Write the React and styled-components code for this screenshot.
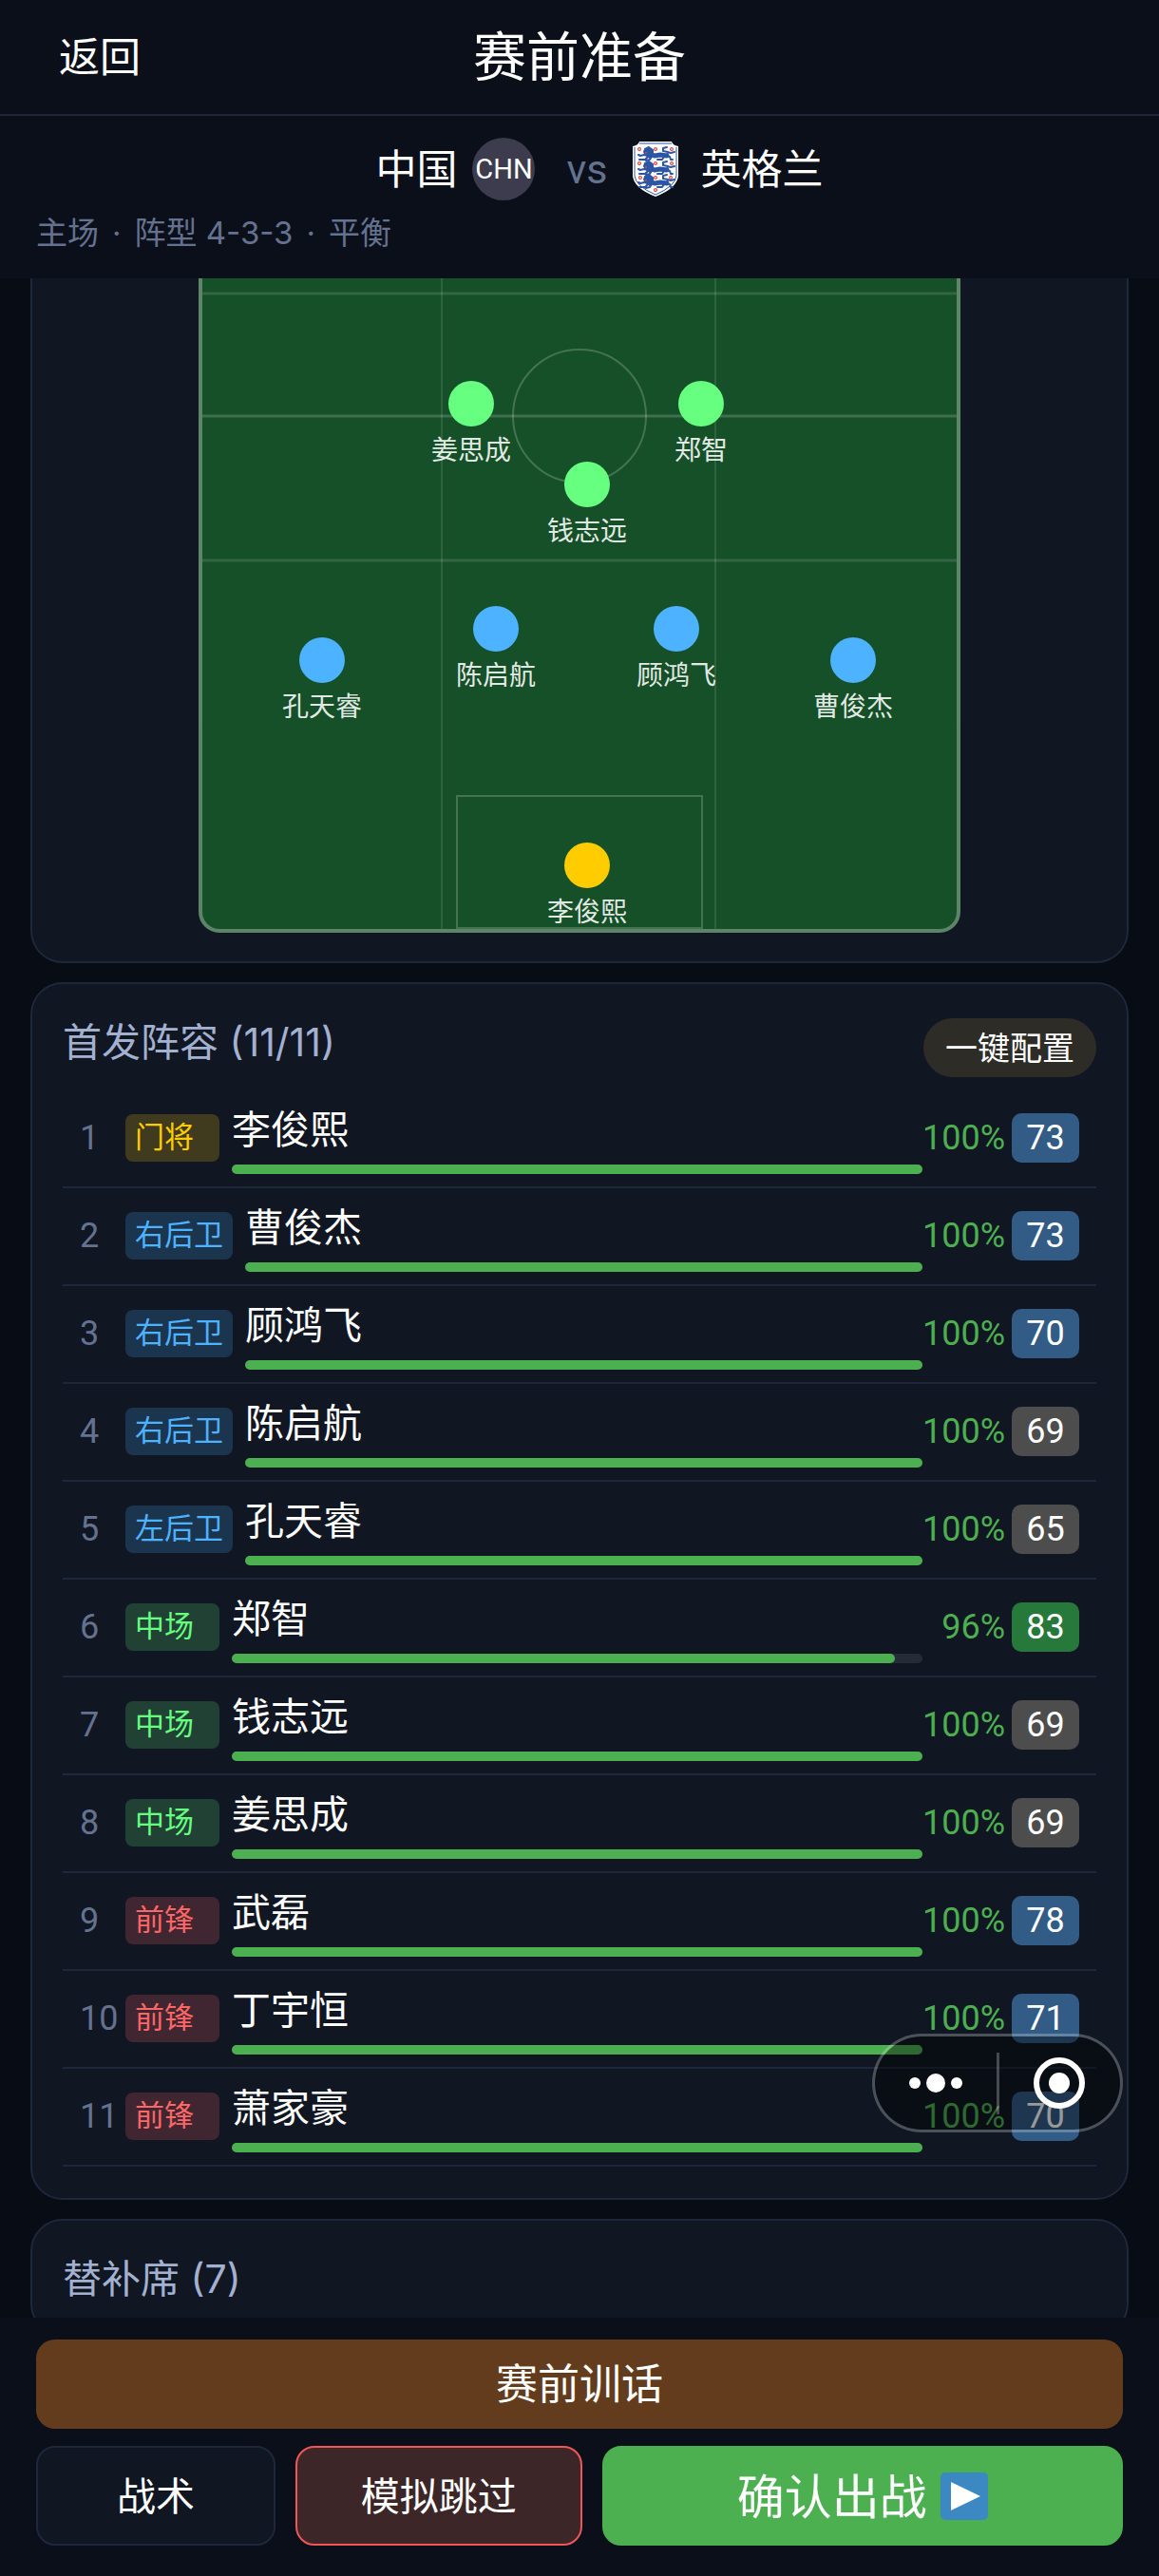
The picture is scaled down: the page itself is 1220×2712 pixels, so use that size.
import React from "react";
import styled, { createGlobalStyle } from "styled-components";

// Stylesheet

const color = {
  page: "#080c15",
  bar: "#0b0f1a",
  panel: "#101622",
  line: "#1f273b",
  white: "#ffffff",
  muted: "#64728f",
  title: "#a3b1d1",
  green: "#4caf50"
};

const tones = {
  gk: { text: "#ffcc00", back: "#403a1e" },
  df: { text: "#4db2ff", back: "#1c354e" },
  mf: { text: "#66ff80", back: "#214135" },
  fw: { text: "#ff6666", back: "#402631" }
};

const ratingBack = { top: "#27783b", good: "#325b86", plain: "#4d4d4d" };

const GlobalStyle = createGlobalStyle`
* {
  box-sizing: border-box;
}
body {
  margin: 0;
  background-color: ${color.page};
  color: ${color.white};
  font-family: Roboto, "Noto Sans CJK SC", sans-serif;
}
button {
  font-family: inherit;
  color: inherit;
  cursor: pointer;
}
`;

const Screen = styled.div`
display: flex;
flex-direction: column;
height: 100vh;
overflow: hidden;
`;

const TopBar = styled.header`
display: grid;
grid-template-columns: 1fr auto 1fr;
align-items: center;
flex: none;
height: 122px;
padding: 2px 62px 0;
background-color: ${color.bar};
border-bottom: 2px solid ${color.line};
`;

const BackButton = styled.button`
justify-self: start;
padding: 0;
border: 0;
background: none;
font-size: 43px;
line-height: 60px;
`;

const PageTitle = styled.h1`
margin: 0;
font-size: 56px;
line-height: 80px;
font-weight: 400;
`;

const MatchBar = styled.section`
flex: none;
height: 171px;
padding: 23px 38px 0;
background-color: ${color.bar};
`;

const Teams = styled.div`
display: flex;
justify-content: center;
align-items: center;
height: 66px;
padding-left: 42px;
font-size: 43px;
`;

const TeamName = styled.span`
padding-bottom: 6px;
`;

const TeamCode = styled.span`
display: flex;
justify-content: center;
align-items: center;
width: 66px;
height: 66px;
margin-left: 16px;
border-radius: 50%;
background-color: #3d3c4f;
font-size: 29px;
`;

const Versus = styled.span`
margin: 0 26px 0 33px;
color: ${color.muted};
font-size: 43px;
`;

const Crest = styled.svg`
width: 48px;
height: 58px;
margin-right: 24px;
`;

const MatchInfo = styled.p`
display: flex;
gap: 14px;
margin: 0;
padding-top: 9px;
color: ${color.muted};
font-family: Inter, "Noto Sans CJK SC", sans-serif;
font-size: 33px;
line-height: 50px;
`;

const Content = styled.main`
display: flex;
flex-direction: column;
flex: 1;
gap: 20px;
min-height: 0;
padding: 0 32px;
overflow: hidden;
`;

const Panel = styled.section`
flex: none;
padding: 36px 32px 33px;
background-color: ${color.panel};
border: 2px solid ${color.line};
border-radius: 34px;
`;

const PitchPanel = styled(Panel)`
display: flex;
justify-content: center;
padding: 0 0 30px;
border-top: 0;
border-radius: 0 0 34px 34px;
`;

const Pitch = styled.div`
position: relative;
width: 802px;
height: 689px;
border: 4px solid rgba(255, 255, 255, 0.3);
border-top: 0;
border-radius: 0 0 22px 22px;
background-color: #165029;
`;

const PitchLines = styled.svg`
display: block;
width: 100%;
height: 100%;
`;

const Spot = styled.div`
position: absolute;
left: ${props => props.$x}px;
top: ${props => props.$y}px;
display: flex;
flex-direction: column;
align-items: center;
transform: translate(-50%, -24px);
color: rgba(255, 255, 255, 0.9);
font-size: 28px;
line-height: 34px;
white-space: nowrap;
&::before {
  content: "";
  width: 48px;
  height: 48px;
  margin-bottom: 9px;
  border-radius: 50%;
  background-color: ${props => tones[props.$tone].text};
}
`;

const PanelHead = styled.div`
display: flex;
justify-content: space-between;
align-items: flex-start;
margin-bottom: 14px;
`;

const PanelTitle = styled.h2`
margin: 0;
color: ${color.title};
font-family: Inter, "Noto Sans CJK SC", sans-serif;
font-size: 41px;
line-height: 50px;
font-weight: 400;
`;

const AutoButton = styled.button`
height: 62px;
padding: 0 23px 4px;
border: 0;
border-radius: 31px;
background-color: #2e2c27;
font-size: 34px;
`;

const PlayerList = styled.ol`
margin: 0;
padding: 0;
list-style: none;
`;

const PlayerRow = styled.li`
display: flex;
align-items: center;
padding: 12px 18px 13px;
border-bottom: 2px solid ${color.line};
`;

const ShirtNumber = styled.span`
width: 48px;
color: ${color.muted};
font-size: 36px;
`;

const Position = styled.span`
min-width: 99px;
height: 50px;
margin-right: 13px;
padding: 0 10px;
border-radius: 8px;
background-color: ${props => tones[props.$tone].back};
color: ${props => tones[props.$tone].text};
font-size: 31px;
line-height: 50px;
`;

const PlayerMain = styled.div`
flex: 1;
`;

const PlayerName = styled.div`
margin-bottom: 6px;
font-size: 41px;
line-height: 60px;
`;

const Track = styled.div`
height: 10px;
border-radius: 5px;
background-color: #262b38;
`;

const Fill = styled.div`
height: 10px;
border-radius: 5px;
background-color: ${color.green};
`;

const Stamina = styled.span`
width: 87px;
margin-right: 7px;
color: ${color.green};
font-size: 36px;
text-align: right;
`;

const Rating = styled.span`
width: 71px;
height: 52px;
border-radius: 10px;
background-color: ${props => ratingBack[props.$level]};
font-size: 36px;
line-height: 52px;
text-align: center;
`;

const Footer = styled.footer`
flex: none;
padding: 23px 38px 32px;
background-color: ${color.bar};
`;

const TalkButton = styled.button`
display: block;
width: 100%;
height: 94px;
margin-bottom: 18px;
padding: 0 0 6px;
border: 0;
border-radius: 20px;
background-color: #633c1e;
font-size: 44px;
`;

const Actions = styled.div`
display: grid;
grid-template-columns: 252fr 301fr 548fr;
gap: 21px;
`;

const ActionButton = styled.button`
height: 105px;
padding: 0 0 5px;
border: 2px solid ${props => props.$edge};
border-radius: 20px;
background-color: ${props => props.$back};
font-size: 41px;
`;

const ConfirmButton = styled(ActionButton)`
display: flex;
justify-content: center;
align-items: center;
gap: 14px;
padding: 0;
font-size: 50px;
`;

const ConfirmLabel = styled.span`
padding-bottom: 6px;
`;

const PlayIcon = styled.svg`
width: 50px;
height: 50px;
`;

const Capsule = styled.div`
position: fixed;
right: 38px;
bottom: 467px;
display: grid;
grid-template-columns: 1fr 3px 1fr;
align-items: center;
width: 264px;
height: 104px;
border: 3px solid rgba(255, 255, 255, 0.25);
border-radius: 52px;
background-color: rgba(0, 0, 0, 0.4);
background-clip: padding-box;
`;

const CapsuleButton = styled.button`
display: flex;
justify-content: center;
padding: 0;
border: 0;
background: none;
`;

const CapsuleLine = styled.span`
height: 65px;
background-color: rgba(255, 255, 255, 0.25);
`;

// Data

const spots = [
  { name: "姜思成", tone: "mf", x: 283, y: 132 },
  { name: "郑智", tone: "mf", x: 525, y: 132 },
  { name: "钱志远", tone: "mf", x: 405, y: 217 },
  { name: "陈启航", tone: "df", x: 309, y: 369 },
  { name: "顾鸿飞", tone: "df", x: 499, y: 369 },
  { name: "孔天睿", tone: "df", x: 126, y: 402 },
  { name: "曹俊杰", tone: "df", x: 685, y: 402 },
  { name: "李俊熙", tone: "gk", x: 405, y: 618 }
];

const players = [
  { name: "李俊熙", position: "门将", tone: "gk", stamina: 100, rating: 73 },
  { name: "曹俊杰", position: "右后卫", tone: "df", stamina: 100, rating: 73 },
  { name: "顾鸿飞", position: "右后卫", tone: "df", stamina: 100, rating: 70 },
  { name: "陈启航", position: "右后卫", tone: "df", stamina: 100, rating: 69 },
  { name: "孔天睿", position: "左后卫", tone: "df", stamina: 100, rating: 65 },
  { name: "郑智", position: "中场", tone: "mf", stamina: 96, rating: 83 },
  { name: "钱志远", position: "中场", tone: "mf", stamina: 100, rating: 69 },
  { name: "姜思成", position: "中场", tone: "mf", stamina: 100, rating: 69 },
  { name: "武磊", position: "前锋", tone: "fw", stamina: 100, rating: 78 },
  { name: "丁宇恒", position: "前锋", tone: "fw", stamina: 100, rating: 71 },
  { name: "萧家豪", position: "前锋", tone: "fw", stamina: 100, rating: 70 }
];

const ratingLevel = rating => {
  if (rating >= 80) return "top";
  return rating >= 70 ? "good" : "plain";
};

const roses = [
  [7, 8], [24, 8], [41, 8], [7, 23], [24, 23], [41, 23], [8, 38], [24, 38], [40, 38], [24, 51]
];

// One lion: head and mane, body, legs, tail
const Lion = ({ y }) => (
  <g transform={`translate(0 ${y})`} fill="none" stroke="#2c56a5" strokeLinecap="round" strokeLinejoin="round">
    <path d="M13 1l4-2 4 3 0 5-3 3-4-3-2-3z" fill="#2c56a5" strokeWidth="2" />
    <path d="M18 6l5 2 6-1 7 1" strokeWidth="5" />
    <path d="M16 8l-4-1-4 1-2-1M16 9l-3 3-6 0M20 9l-2 3-4 1M34 8l5 1 1 3 2 0M33 9l-2 3-5 0" strokeWidth="2" />
    <path d="M36 7l1-3-5-1 0-3 4-1M36 4l4 1 4-1" strokeWidth="2" />
    <circle cx="14" cy="5" r="1" fill="#d8433c" stroke="none" />
  </g>
);

const EnglandCrest = () => (
  <Crest viewBox="0 0 48 58" role="img" aria-label="英格兰">
    <path d="M7 0h34q1 4 7 5v31q-1 13-24 22Q1 49 0 36V5q6-1 7-5z" fill="#fff" />
    <path d="M7 2h34M2 6v30q1 11 22 20 21-9 22-20V6" fill="none" stroke="#2c56a5" strokeWidth="1" />
    {[7, 22, 36].map(y => (
      <Lion key={y} y={y} />
    ))}
    {roses.map(([x, y]) => (
      <g key={`${x}-${y}`}>
        <circle cx={x} cy={y} r="2" fill="#d8433c" />
        <circle cx={x} cy={y} r="1" fill="#f3c9c4" />
      </g>
    ))}
  </Crest>
);

const App = () => (
  <Screen>
    <GlobalStyle />
    <TopBar>
      <BackButton type="button">返回</BackButton>
      <PageTitle>赛前准备</PageTitle>
    </TopBar>
    <MatchBar>
      <Teams>
        <TeamName>中国</TeamName>
        <TeamCode>CHN</TeamCode>
        <Versus>vs</Versus>
        <EnglandCrest />
        <TeamName>英格兰</TeamName>
      </Teams>
      <MatchInfo>
        <span>主场</span>
        <span>·</span>
        <span>阵型 4-3-3</span>
        <span>·</span>
        <span>平衡</span>
      </MatchInfo>
    </MatchBar>

    <Content>
      <PitchPanel>
        <Pitch>
          <PitchLines viewBox="0 0 794 685" fill="none" stroke="#fff" aria-hidden="true">
            <path d="M0 16h794M0 297h794" strokeWidth="3" strokeOpacity="0.13" />
            <path d="M0 145h794" strokeWidth="3" strokeOpacity="0.18" />
            <path d="M252 0v685M540 0v685" strokeWidth="2" strokeOpacity="0.11" />
            <circle cx="397" cy="145" r="70" strokeWidth="2" strokeOpacity="0.2" />
            <path d="M268 685V545h258v140M268 684h258" strokeWidth="2" strokeOpacity="0.2" />
          </PitchLines>
          {spots.map(spot => (
            <Spot key={spot.name} $x={spot.x} $y={spot.y} $tone={spot.tone}>
              {spot.name}
            </Spot>
          ))}
        </Pitch>
      </PitchPanel>

      <Panel>
        <PanelHead>
          <PanelTitle>首发阵容 (11/11)</PanelTitle>
          <AutoButton type="button">一键配置</AutoButton>
        </PanelHead>
        <PlayerList>
          {players.map((player, index) => (
            <PlayerRow key={player.name}>
              <ShirtNumber>{index + 1}</ShirtNumber>
              <Position $tone={player.tone}>{player.position}</Position>
              <PlayerMain>
                <PlayerName>{player.name}</PlayerName>
                <Track>
                  <Fill style={{ width: `${player.stamina}%` }} />
                </Track>
              </PlayerMain>
              <Stamina>{player.stamina}%</Stamina>
              <Rating $level={ratingLevel(player.rating)}>{player.rating}</Rating>
            </PlayerRow>
          ))}
        </PlayerList>
      </Panel>

      <Panel>
        <PanelTitle>替补席 (7)</PanelTitle>
      </Panel>
    </Content>

    <Footer>
      <TalkButton type="button">赛前训话</TalkButton>
      <Actions>
        <ActionButton type="button" $back={color.panel} $edge={color.line}>战术</ActionButton>
        <ActionButton type="button" $back="#3c2628" $edge="#f05656">模拟跳过</ActionButton>
        <ConfirmButton type="button" $back={color.green} $edge={color.green}>
          <ConfirmLabel>确认出战</ConfirmLabel>
          <PlayIcon viewBox="0 0 50 50" aria-hidden="true">
            <rect width="50" height="50" rx="5" fill="#3b88c3" />
            <path d="M11 10l31 15-31 15z" fill="#fff" />
          </PlayIcon>
        </ConfirmButton>
      </Actions>
    </Footer>

    <Capsule>
      <CapsuleButton type="button" aria-label="更多">
        <svg width="56" height="54" viewBox="0 0 56 54" fill="#fff">
          <circle cx="6" cy="27" r="6" />
          <circle cx="28" cy="27" r="10" />
          <circle cx="50" cy="27" r="6" />
        </svg>
      </CapsuleButton>
      <CapsuleLine />
      <CapsuleButton type="button" aria-label="关闭">
        <svg width="54" height="54" viewBox="0 0 54 54">
          <circle cx="27" cy="27" r="24" fill="none" stroke="#fff" strokeWidth="6" />
          <circle cx="27" cy="27" r="11" fill="#fff" />
        </svg>
      </CapsuleButton>
    </Capsule>
  </Screen>
);

export default App;
